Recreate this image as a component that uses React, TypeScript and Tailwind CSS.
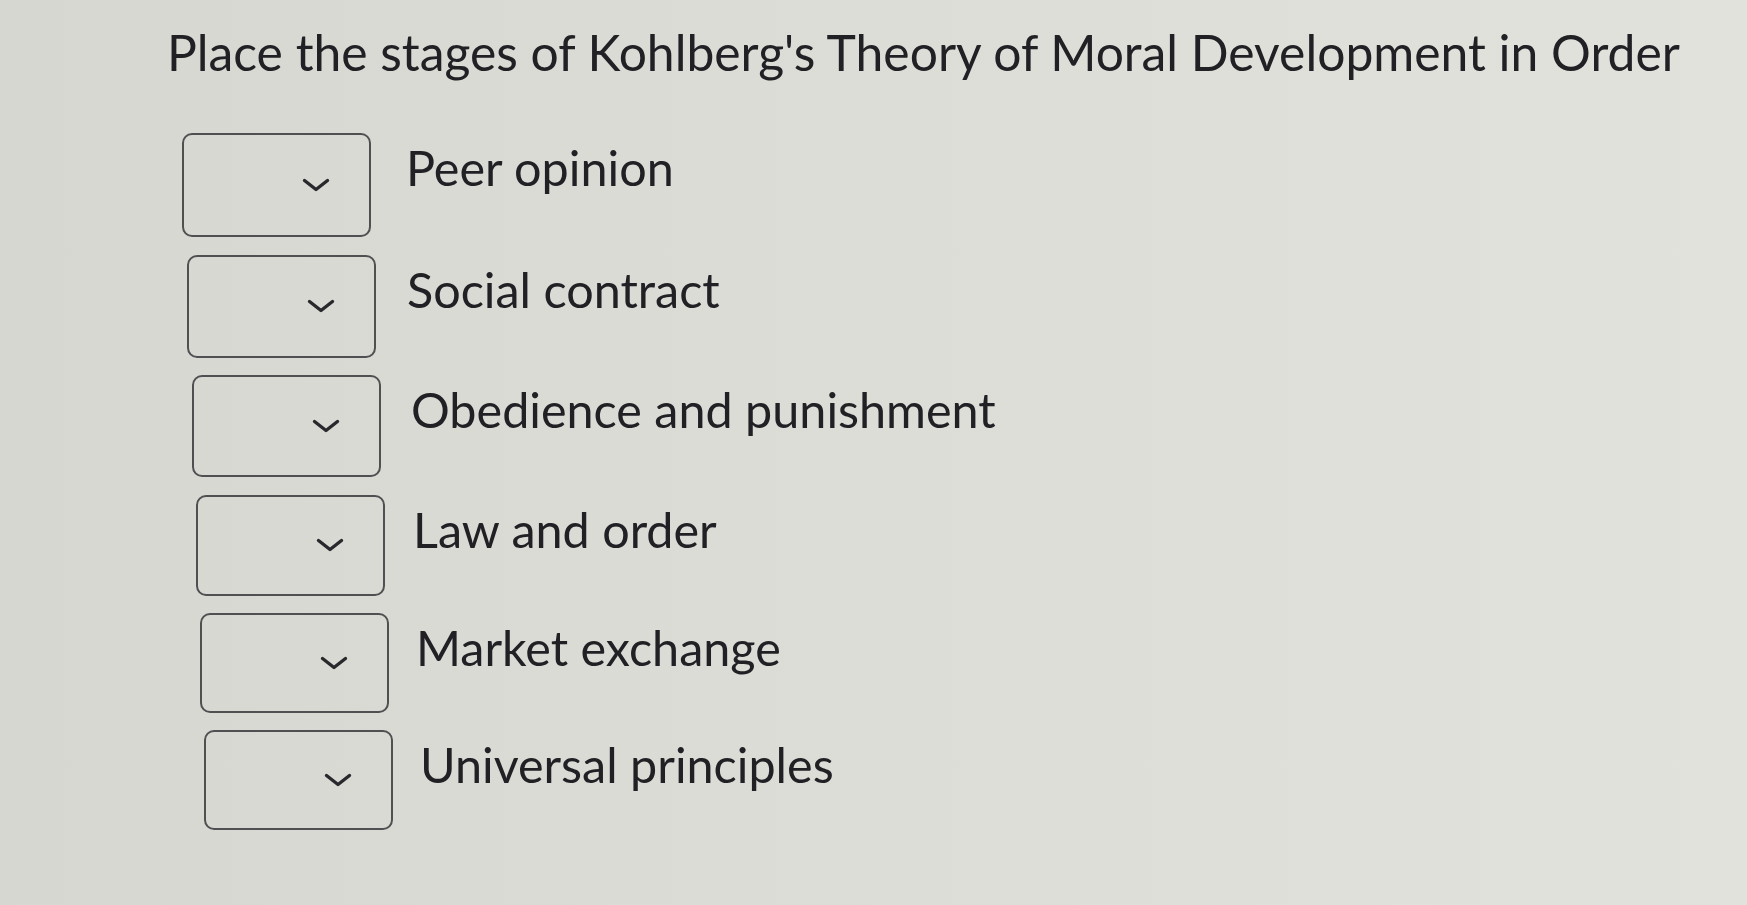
import React from "react";

const items = [
  { label: "Peer opinion", ml: "ml-0", gap: "ml-[35px]", h: "h-[104px]", mt: "mt-0" },
  { label: "Social contract", ml: "ml-[5px]", gap: "ml-[31px]", h: "h-[103px]", mt: "mt-[18px]" },
  { label: "Obedience and punishment", ml: "ml-[10px]", gap: "ml-[30px]", h: "h-[102px]", mt: "mt-[17px]" },
  { label: "Law and order", ml: "ml-[14px]", gap: "ml-[28px]", h: "h-[101px]", mt: "mt-[18px]" },
  { label: "Market exchange", ml: "ml-[18px]", gap: "ml-[27px]", h: "h-[100px]", mt: "mt-[17px]" },
  { label: "Universal principles", ml: "ml-[22px]", gap: "ml-[27px]", h: "h-[100px]", mt: "mt-[17px]" },
];

function Chevron() {
  return (
    <svg width="28" height="14" viewBox="0 0 28 14" fill="none">
      <path d="M2.5 2.5 L14 11.5 L25.5 2.5" stroke="#29292d" strokeWidth="3.4" strokeLinecap="round" strokeLinejoin="round" />
    </svg>
  );
}

export default function App() {
  return (
    <div
      className="w-[1747px] h-[905px] overflow-hidden bg-gradient-to-r from-[#d6d7d1] via-[#dcddd7] to-[#e2e2dd] text-[#212125] pl-[167px] pt-[23px]"
      style={{ fontFamily: "Lato, 'Open Sans', sans-serif" }}
    >
      <h1 className="text-[49.8px] leading-[1.2] font-normal">
        Place the stages of Kohlberg's Theory of Moral Development in Order
      </h1>
      <div className="mt-[50px] pl-[15px] flex flex-col">
        {items.map((it) => (
          <div key={it.label} className={`flex items-start ${it.ml} ${it.mt}`}>
            <div className={`w-[189px] ${it.h} rounded-[10px] border-2 border-[#505053] flex items-center justify-start pl-[118px] shrink-0`}>
              <Chevron />
            </div>
            <div className={`${it.gap} mt-[5px] text-[48.5px] leading-[1.2]`}>{it.label}</div>
          </div>
        ))}
      </div>
    </div>
  );
}
